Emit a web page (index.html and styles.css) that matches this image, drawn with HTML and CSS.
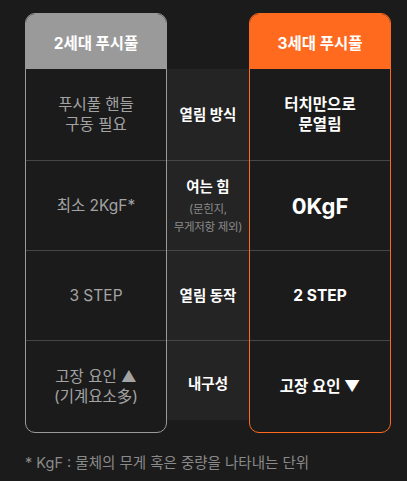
FILE: index.html
```html
<!DOCTYPE html>
<html lang="ko">
<head>
<meta charset="utf-8">
<link rel="stylesheet" href="styles.css">
</head>
<body>
<div class="page">
  <div class="table">
    <div class="card card-old">
      <div class="card-head">2세대 푸시풀</div>
      <div class="cell r1 side-old">푸시풀 핸들<br>구동 필요</div>
      <div class="cell r2 side-old">최소 2KgF*</div>
      <div class="cell r3 side-old">3 STEP</div>
      <div class="cell r4 side-old">고장 요인 ▲<br>(기계요소多)</div>
    </div>
    <div class="mid">
      <div class="cell r1 mid-cell">열림 방식</div>
      <div class="cell r2 mid-cell">
        <div class="mid-stack">
          <div class="mid-title">여는 힘</div>
          <div class="mid-note">(문힌지,<br>무게저항 제외)</div>
        </div>
      </div>
      <div class="cell r3 mid-cell">열림 동작</div>
      <div class="cell r4m mid-cell">내구성</div>
    </div>
    <div class="card card-new">
      <div class="card-head">3세대 푸시풀</div>
      <div class="cell r1 side-new">터치만으로<br>문열림</div>
      <div class="cell r2 side-new big">0KgF</div>
      <div class="cell r3 side-new">2 STEP</div>
      <div class="cell r4 side-new">고장 요인 ▼</div>
    </div>
  </div>
  <p class="note">* KgF : 물체의 무게 혹은 중량을 나타내는 단위</p>
</div>
</body>
</html>
```

FILE: styles.css
```css
html, body {
  margin: 0;
  padding: 0;
  background: #1b1b1b;
}
body {
  font-family: Inter, "Noto Sans CJK KR", sans-serif;
  width: 407px;
  height: 481px;
  overflow: hidden;
}
.page {
  padding: 13px 0 0 25px;
}
.table {
  display: flex;
  align-items: flex-start;
}
.card {
  width: 142px;
  box-sizing: border-box;
  border: 1px solid;
  border-radius: 10px;
  overflow: hidden;
}
.card-old { border-color: #9a9a9a; }
.card-new { border-color: #ff6a1f; }
.card-head {
  height: 55px;
  display: flex;
  align-items: center;
  justify-content: center;
  color: #fff;
  font-weight: 700;
  font-size: 15.5px;
}
.card-old .card-head { background: #9a9a9a; }
.card-new .card-head { background: #ff6a1f; }
.cell {
  display: flex;
  align-items: center;
  justify-content: center;
  text-align: center;
  box-sizing: border-box;
  line-height: 20px;
}
.r1 { height: 91px; }
.r2, .r3 { height: 90px; border-top: 1px solid #464646; }
.r4 { height: 92px; border-top: 1px solid #464646; }
.r4m { height: 80px; border-top: 1px solid #464646; padding-top: 6px; }
.side-old {
  color: #a3a3a3;
  font-size: 15.5px;
}
.side-new {
  color: #fff;
  font-size: 15.5px;
  font-weight: 700;
}
.side-new.big {
  font-size: 22px;
}
.mid {
  width: 82px;
  margin-top: 56px;
  background: #242424;
}
.mid-cell {
  color: #fff;
  font-size: 14.5px;
  font-weight: 700;
}
.mid-stack {
  display: flex;
  flex-direction: column;
  align-items: center;
  padding-top: 2px;
}
.mid-title {
  margin-bottom: 3px;
}
.mid-note {
  font-size: 11.5px;
  line-height: 18px;
  font-weight: 400;
  color: #8a8a8a;
  letter-spacing: -0.3px;
}
.note {
  margin: 20px 0 0;
  font-size: 14.5px;
  line-height: 20px;
  color: #8a8a8a;
}
```
